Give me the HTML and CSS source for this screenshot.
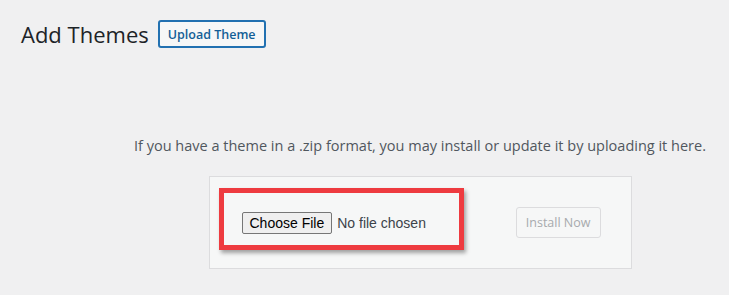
FILE: index.html
```html
<!DOCTYPE html>
<html lang="en">
<head>
<meta charset="utf-8">
<title>Add Themes</title>
<link rel="stylesheet" href="styles.css">
</head>
<body>
<div class="wrap">
  <div class="page-header">
    <h1 class="page-title">Add Themes</h1>
    <button class="page-title-action" type="button">Upload Theme</button>
  </div>
  <div class="upload-theme">
    <p class="install-help">If you have a theme in a .zip format, you may install or update it by uploading it here.</p>
    <form class="upload-form">
      <input class="file-input" type="file" name="themezip">
      <button class="install-btn" type="button" disabled>Install Now</button>
      <div class="highlight"></div>
    </form>
  </div>
</div>
</body>
</html>
```

FILE: styles.css
```css
html, body {
  margin: 0;
  padding: 0;
  background: #f0f0f1;
  overflow: hidden;
}
body {
  font-family: "Open Sans", "Liberation Sans", sans-serif;
  color: #3c434a;
}
.wrap {
  padding: 20px 0 0 21px;
}
.page-header {
  display: flex;
  align-items: center;
  gap: 9px;
}
.page-title {
  margin: 0;
  font-size: 22px;
  font-weight: 400;
  line-height: 28px;
  color: #1d2327;
}
.page-title-action {
  font-family: "Open Sans", "Liberation Sans", sans-serif;
  font-size: 12.5px;
  font-weight: 600;
  color: #135e96;
  background: #f6f7f7;
  border: 2px solid #2271b1;
  border-radius: 3px;
  height: 28px;
  padding: 0 8px;
  cursor: pointer;
}
.upload-theme {
  display: flex;
  flex-direction: column;
  align-items: center;
  padding: 0 23px 0 113px;
}
.install-help {
  margin: 88px 0 0;
  font-size: 14.5px;
  line-height: 20px;
  color: #50575e;
  white-space: nowrap;
}
.upload-form {
  position: relative;
  margin-top: 20px;
  width: 361px;
  padding: 30px;
  border: 1px solid #dcdcde;
  background: #f6f7f7;
  display: flex;
  justify-content: space-between;
  align-items: center;
}
.file-input {
  margin-left: 2px;
  font-family: "Liberation Sans", Arial, sans-serif;
  font-size: 14px;
  color: #3c434a;
  width: 200px;
}
.file-input::file-selector-button {
  font-family: "Liberation Sans", Arial, sans-serif;
  font-size: 14px;
  color: #000;
  background: #efefef;
  border: 1px solid #767676;
  border-radius: 2px;
  padding: 2px 7px;
  margin-right: 5px;
}
.install-btn {
  font-family: "Open Sans", "Liberation Sans", sans-serif;
  font-size: 12.5px;
  color: #a7aaad;
  background: #f6f7f7;
  border: 1px solid #dcdcde;
  border-radius: 3px;
  height: 31px;
  padding: 0 9px;
}
.highlight {
  position: absolute;
  left: 9px;
  top: 11px;
  width: 235px;
  height: 52px;
  border: 5px solid #ee3b40;
  box-shadow: 2px 3px 4px rgba(0, 0, 0, 0.35);
  pointer-events: none;
}
```
